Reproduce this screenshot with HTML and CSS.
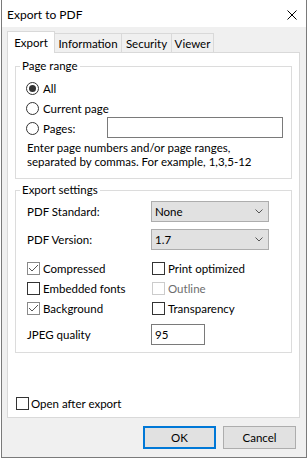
FILE: index.html
```html
<!DOCTYPE html>
<html lang="en">
<head>
    <meta charset="UTF-8">
    <meta name="viewport" content="width=device-width, initial-scale=1.0">
    <title>Export to PDF</title>
    <link rel="stylesheet" href="styles.css">
</head>
<body>

    <div class="window">
        <!-- Title bar -->
        <div class="titlebar">
            <span class="title">Export to PDF</span>
            <svg class="close" width="10" height="10" viewBox="0 0 10 10">
                <path d="M0.5 0.5 L9.5 9.5 M9.5 0.5 L0.5 9.5" stroke="#000" stroke-width="1" fill="none"/>
            </svg>
        </div>

        <div class="body">
            <!-- Tabs -->
            <div class="tabs">
                <div class="tab active tab-export">Export</div>
                <div class="tab tab-info">Information</div>
                <div class="tab tab-security">Security</div>
                <div class="tab tab-viewer">Viewer</div>
            </div>

            <div class="panel">
                <fieldset class="group range">
                    <legend>Page range</legend>
                    <div class="row">
                        <span class="radio on"></span>All
                    </div>
                    <div class="row">
                        <span class="radio"></span>Current page
                    </div>
                    <div class="row">
                        <span class="radio"></span>Pages:
                        <input class="text pages" type="text">
                    </div>
                    <p class="hint">Enter page numbers and/or page ranges,<br>separated by commas. For example, 1,3,5-12</p>
                </fieldset>

                <fieldset class="group settings">
                    <legend>Export settings</legend>
                    <div class="field">
                        <span class="label">PDF Standard:</span>
                        <div class="select">None
                            <svg width="8" height="5" viewBox="0 0 8 5"><path d="M0.5 0.5 L4 4 L7.5 0.5" stroke="#555" fill="none"/></svg>
                        </div>
                    </div>
                    <div class="field second">
                        <span class="label">PDF Version:</span>
                        <div class="select">1.7
                            <svg width="8" height="5" viewBox="0 0 8 5"><path d="M0.5 0.5 L4 4 L7.5 0.5" stroke="#555" fill="none"/></svg>
                        </div>
                    </div>

                    <div class="checks">
                        <div class="row"><span class="box checked"><svg width="11" height="11" viewBox="0 0 11 11"><path d="M1 5 L4 8 L10 2" stroke="#555" fill="none"/></svg></span>Compressed</div>
                        <div class="row"><span class="box"></span>Print optimized</div>
                        <div class="row"><span class="box"></span>Embedded fonts</div>
                        <div class="row disabled"><span class="box"></span>Outline</div>
                        <div class="row"><span class="box checked"><svg width="11" height="11" viewBox="0 0 11 11"><path d="M1 5 L4 8 L10 2" stroke="#555" fill="none"/></svg></span>Background</div>
                        <div class="row"><span class="box"></span>Transparency</div>
                    </div>

                    <div class="field jpeg">
                        <span class="label">JPEG quality</span>
                        <input class="text quality" type="text" value="95">
                    </div>
                </fieldset>

                <div class="row open">
                    <span class="box"></span>Open after export
                </div>
            </div>

            <div class="buttons">
                <button class="btn default">OK</button>
                <button class="btn">Cancel</button>
            </div>
        </div>
    </div>

</body>
</html>
```

FILE: styles.css
```css
* {
    box-sizing: border-box;
}
body {
    margin: 0;
    background: #ffffff;
    font-family: Lato, "Noto Sans", sans-serif;
    font-size: 11.5px;
    color: #000;
}
.window {
    margin-left: 1px;
    width: 306px;
    height: 458px;
    border: 1px solid #7a7a7a;
    border-top: none;
    background: #f0f0f0;
    display: flex;
    flex-direction: column;
}
.titlebar {
    height: 27px;
    background: #fff;
    display: flex;
    align-items: center;
    padding-left: 5px;
    padding-right: 9px;
    padding-top: 1px;
    font-size: 12px;
}
.title {
    flex: 1;
}
.close {
    display: block;
    margin-top: 1px;
}
.body {
    flex: 1;
    padding: 4px 6px 0 5px;
    display: flex;
    flex-direction: column;
}

/* tabs */
.tabs {
    display: flex;
    align-items: flex-end;
    height: 21px;
}
.tab {
    height: 19px;
    border: 1px solid #d9d9d9;
    border-bottom: none;
    border-left: none;
    background: #f0f0f0;
    display: flex;
    align-items: center;
    justify-content: center;
    padding-top: 1px;
}
.tab.active {
    height: 22px;
    margin-bottom: -1px;
    background: #fff;
    border-left: 1px solid #d9d9d9;
    position: relative;
    z-index: 1;
    padding-top: 0;
    padding-bottom: 1px;
}
.tab-export { width: 48px; }
.tab-info { width: 67px; }
.tab-security { width: 50px; }
.tab-viewer { width: 42px; }

.panel {
    height: 366px;
    background: #fff;
    border: 1px solid #d9d9d9;
    padding: 5px 7px 4px 7px;
    display: flex;
    flex-direction: column;
}

/* group boxes */
.group {
    margin: 0;
    min-width: 0;
    border: 1px solid #dcdcdc;
    padding: 4px 8px 9px 10px;
}
.group legend {
    line-height: 16px;
    padding: 0 2px;
    margin-left: -6px;
}
.settings {
    margin-top: 3px;
    padding: 3px 8px 7px 10px;
}

.row {
    display: flex;
    align-items: center;
    height: 20px;
    white-space: nowrap;
}
.radio {
    width: 13px;
    height: 13px;
    border: 1px solid #333;
    border-radius: 50%;
    margin-right: 4px;
    background: #fff;
    display: flex;
    align-items: center;
    justify-content: center;
}
.radio.on::after {
    content: "";
    width: 7px;
    height: 7px;
    border-radius: 50%;
    background: #333;
}
.text {
    height: 21px;
    border: 1px solid #7a7a7a;
    background: #fff;
    font: inherit;
    padding: 0 3px;
    outline: none;
}
.pages {
    width: 176px;
    margin-left: auto;
    margin-top: -1px;
}
.hint {
    margin: 3px 0 0 1px;
    line-height: 14px;
}

.field {
    display: grid;
    grid-template-columns: 125px 118px;
    align-items: center;
    height: 21px;
}
.field .label {
    padding-left: 1px;
}
.field.second {
    margin-top: 7px;
}
.select {
    height: 21px;
    background: #e1e1e1;
    border: 1px solid #adadad;
    display: flex;
    align-items: center;
    padding: 0 5px 0 3px;
    justify-content: space-between;
}
.checks {
    display: grid;
    grid-template-columns: 125px 1fr;
    margin-top: 8px;
}
.box {
    width: 13px;
    height: 13px;
    border: 1px solid #333;
    background: #fff;
    margin-left: 1px;
    margin-right: 3px;
    display: flex;
    align-items: center;
    justify-content: center;
}
.box.checked {
    border-color: #8a8a8a;
}
.box svg {
    display: block;
}
.disabled {
    color: #6d6d6d;
}
.disabled .box {
    border-color: #cccccc;
}
.jpeg {
    margin-top: 6px;
}
.quality {
    width: 54px;
}
.open {
    margin-top: auto;
}
.open .box {
    margin-right: 2px;
}

/* dialog buttons */
.buttons {
    display: flex;
    justify-content: flex-end;
    gap: 7px;
    margin-top: 8px;
    margin-right: 4px;
}
.btn {
    width: 73px;
    height: 23px;
    background: #e1e1e1;
    border: 1px solid #adadad;
    font: inherit;
    color: #000;
    padding: 0;
}
.btn.default {
    border: 2px solid #0078d7;
}
```
